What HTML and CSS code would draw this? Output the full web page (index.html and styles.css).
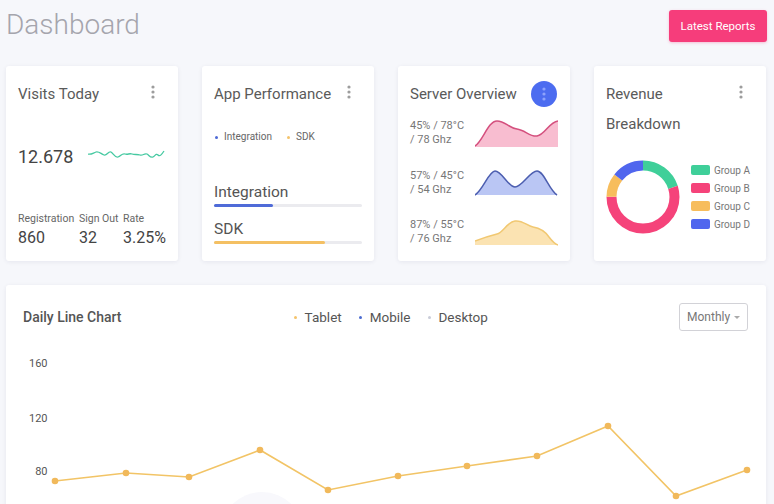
FILE: index.html
```html
<!DOCTYPE html>
<html>
<head>
<meta charset="utf-8">
<link rel="stylesheet" href="styles.css">
</head>
<body>
<div class="page">
  <header class="top">
    <h1 class="page-title">Dashboard</h1>
    <button class="btn-reports">Latest Reports</button>
  </header>

  <section class="cards">
    <div class="card small-card">
      <div class="card-head">
        <h2 class="card-title">Visits Today</h2>
        <svg class="dots" viewBox="0 0 4 14"><circle cx="2" cy="2" r="1.6"/><circle cx="2" cy="7" r="1.6"/><circle cx="2" cy="12" r="1.6"/></svg>
      </div>
      <div class="visits-main">
        <span class="big-num">12.678</span>
        <svg class="spark" viewBox="88 146 77 14"><path d="M88,152 C91,153 93,151 96,150 C99,149 101,152 104,153 C107,154 108,149 111,150 C113,151 115,156 118,155 C121,154 122,151 125,152 C128,153 129,151 132,152 C135,153 137,152 140,153 C143,154 144,151 147,152 C149,153 150,156 153,155 C155,154 156,151 158,153 C160,155 162,152 164,149" fill="none" stroke="#45c9a1" stroke-width="1.3"/></svg>
      </div>
      <div class="stats">
        <div class="stat"><span class="stat-label">Registration</span><span class="stat-val">860</span></div>
        <div class="stat"><span class="stat-label">Sign Out</span><span class="stat-val">32</span></div>
        <div class="stat"><span class="stat-label">Rate</span><span class="stat-val">3.25%</span></div>
      </div>
    </div>

    <div class="card small-card">
      <div class="card-head">
        <h2 class="card-title">App Performance</h2>
        <svg class="dots" viewBox="0 0 4 14"><circle cx="2" cy="2" r="1.6"/><circle cx="2" cy="7" r="1.6"/><circle cx="2" cy="12" r="1.6"/></svg>
      </div>
      <div class="mini-legend">
        <span class="mini-item"><i class="dot dot-blue"></i>Integration</span>
        <span class="mini-item"><i class="dot dot-yellow"></i>SDK</span>
      </div>
      <div class="perf-label first">Integration</div>
      <div class="track"><div class="fill fill-blue" style="width:40%"></div></div>
      <div class="perf-label">SDK</div>
      <div class="track"><div class="fill fill-yellow" style="width:75%"></div></div>
    </div>

    <div class="card small-card">
      <div class="card-head center">
        <h2 class="card-title">Server Overview</h2>
        <span class="round-btn"><svg viewBox="0 0 4 14" width="4" height="14"><circle cx="2" cy="2" r="1.6"/><circle cx="2" cy="7" r="1.6"/><circle cx="2" cy="12" r="1.6"/></svg></span>
      </div>
      <div class="server-rows">
        <div class="server-row">
          <div class="server-text">45% / 78°C<br>/ 78 Ghz</div>
          <svg class="server-chart" viewBox="0 0 83 27"><path d="M0,26 C8,21 13,1 22,1 C30,1 34,8 42,9 C50,10 55,17 62,16 C70,15 74,2 83,1 L83,27 L0,27 Z" fill="#f8bdd0"/><path d="M0,26 C8,21 13,1 22,1 C30,1 34,8 42,9 C50,10 55,17 62,16 C70,15 74,2 83,1" fill="none" stroke="#d4507e" stroke-width="1.5"/></svg>
        </div>
        <div class="server-row">
          <div class="server-text">57% / 45°C<br>/ 54 Ghz</div>
          <svg class="server-chart" viewBox="0 0 83 27"><path d="M0,26 C8,21 14,2 20,2 C27,2 33,18 40,18 C47,18 55,2 62,2 C69,2 74,21 82,26 Z" fill="#bac6f4"/><path d="M0,26 C8,21 14,2 20,2 C27,2 33,18 40,18 C47,18 55,2 62,2 C69,2 74,21 82,26" fill="none" stroke="#4c5eb0" stroke-width="1.5"/></svg>
        </div>
        <div class="server-row">
          <div class="server-text">87% / 55°C<br>/ 76 Ghz</div>
          <svg class="server-chart" viewBox="0 0 83 27"><path d="M0,22 C8,19 14,17 22,15 C28,14 32,3 40,2 C48,1 52,7 58,8 C64,9 70,12 74,18 C77,22 80,25 83,26 L0,26 Z" fill="#fbe3b2"/><path d="M0,22 C8,19 14,17 22,15 C28,14 32,3 40,2 C48,1 52,7 58,8 C64,9 70,12 74,18 C77,22 80,25 83,26" fill="none" stroke="#f1c872" stroke-width="1.5"/></svg>
        </div>
      </div>
    </div>

    <div class="card small-card">
      <div class="card-head">
        <h2 class="card-title">Revenue<br>Breakdown</h2>
        <svg class="dots" viewBox="0 0 4 14"><circle cx="2" cy="2" r="1.6"/><circle cx="2" cy="7" r="1.6"/><circle cx="2" cy="12" r="1.6"/></svg>
      </div>
      <div class="donut-row">
        <svg class="donut" viewBox="0 0 74 74">
          <g transform="rotate(-90 37 37)" fill="none" stroke-width="10">
            <circle cx="37" cy="37" r="31.5" stroke="#3fcf99" stroke-dasharray="39.58 158.34" stroke-dashoffset="0"/>
            <circle cx="37" cy="37" r="31.5" stroke="#f5437a" stroke-dasharray="108.86 89.06" stroke-dashoffset="-39.58"/>
            <circle cx="37" cy="37" r="31.5" stroke="#f7bd5c" stroke-dasharray="20.78 177.14" stroke-dashoffset="-148.44"/>
            <circle cx="37" cy="37" r="31.5" stroke="#5066ee" stroke-dasharray="28.70 169.22" stroke-dashoffset="-169.22"/>
          </g>
        </svg>
        <ul class="donut-legend">
          <li><i class="sw sw-a"></i>Group A</li>
          <li><i class="sw sw-b"></i>Group B</li>
          <li><i class="sw sw-c"></i>Group C</li>
          <li><i class="sw sw-d"></i>Group D</li>
        </ul>
      </div>
    </div>
  </section>

  <section class="card chart-card">
    <div class="chart-head">
      <h2 class="chart-title">Daily Line Chart</h2>
      <div class="chart-legend">
        <span class="leg-item"><i class="leg-dot tablet"></i>Tablet</span>
        <span class="leg-item"><i class="leg-dot mobile"></i>Mobile</span>
        <span class="leg-item"><i class="leg-dot desktop"></i>Desktop</span>
      </div>
      <div class="chart-tools">
        <div class="select">Monthly<span class="caret"></span></div>
      </div>
    </div>
    <svg class="line-chart" viewBox="6 340 760 170" width="760" height="170">
      <circle cx="262" cy="534" r="42" fill="#f8f8fc"/>
      <g class="axis">
        <text x="47.5" y="367" text-anchor="end">160</text>
        <text x="47.5" y="421.5" text-anchor="end">120</text>
        <text x="47.5" y="474.5" text-anchor="end">80</text>
      </g>
      <polyline points="55,481 126,473 189,477 260,450 328,490 398,476 467,466 537,456 608,426 676,496 747,470" fill="none" stroke="#f2c466" stroke-width="1.6"/>
      <g fill="#f1b95b">
        <circle cx="55" cy="481" r="3.3"/><circle cx="126" cy="473" r="3.3"/><circle cx="189" cy="477" r="3.3"/>
        <circle cx="260" cy="450" r="3.3"/><circle cx="328" cy="490" r="3.3"/><circle cx="398" cy="476" r="3.3"/>
        <circle cx="467" cy="466" r="3.3"/><circle cx="537" cy="456" r="3.3"/><circle cx="608" cy="426" r="3.3"/>
        <circle cx="676" cy="496" r="3.3"/><circle cx="747" cy="470" r="3.3"/>
      </g>
    </svg>
  </section>
</div>
</body>
</html>
```

FILE: styles.css
```css
* { box-sizing: border-box; }
html, body { margin: 0; padding: 0; overflow: hidden; }
body {
  background: #f6f7fb;
  font-family: Roboto, "Liberation Sans", Arial, sans-serif;
  color: #555;
}
.page { padding: 0 7px 0 6px; }

.top {
  height: 66px;
  padding-top: 8px;
  display: flex;
  justify-content: space-between;
  align-items: flex-start;
}
.page-title {
  margin: 0;
  font-size: 28px;
  line-height: 34px;
  font-weight: 300;
  color: #a5a5ad;
}
.btn-reports {
  margin-top: 2px;
  width: 98px;
  height: 32px;
  padding: 0;
  border: 0;
  border-radius: 3px;
  background: #f63d7b;
  color: #fff;
  font-family: inherit;
  font-size: 11.5px;
  box-shadow: 0 1px 3px rgba(246, 61, 123, 0.3);
}

.cards {
  display: grid;
  grid-template-columns: repeat(4, 172px);
  gap: 24px;
}
.card {
  background: #fff;
  border-radius: 3px;
  box-shadow: 0 1px 4px rgba(40, 40, 90, 0.08);
}
.small-card {
  height: 195px;
  padding: 13px 12px 13px 12px;
  display: flex;
  flex-direction: column;
}
.card-head {
  display: flex;
  justify-content: space-between;
  align-items: flex-start;
}
.card-head.center { align-items: center; }
.card-title {
  margin: 0;
  font-size: 15px;
  line-height: 30px;
  font-weight: 400;
  color: #5a5a5a;
  white-space: nowrap;
}
.dots {
  flex: none;
  width: 4px;
  height: 14px;
  margin: 6px 11px 0 0;
  fill: #9d9d9d;
}
.round-btn {
  flex: none;
  width: 26px;
  height: 26px;
  margin-right: 1px;
  border-radius: 50%;
  background: #4c6cf0;
  display: flex;
  align-items: center;
  justify-content: center;
  fill: #8ea3fb;
}

/* Visits */
.visits-main {
  margin-top: 36px;
  display: flex;
  align-items: center;
  height: 24px;
}
.big-num {
  font-size: 18px;
  line-height: 24px;
  color: #444;
}
.spark {
  width: 77px;
  height: 14px;
  margin-left: 15px;
  margin-bottom: 5px;
}
.stats {
  margin-top: auto;
  display: grid;
  grid-template-columns: 61px 44px 1fr;
}
.stat { display: flex; flex-direction: column; }
.stat-label {
  font-size: 10.5px;
  line-height: 14px;
  color: #666;
  white-space: nowrap;
}
.stat-val {
  margin-top: 2.5px;
  font-size: 16px;
  line-height: 20px;
  color: #444;
}

/* App performance */
.mini-legend {
  margin-top: 21px;
  display: flex;
  gap: 14px;
  font-size: 10px;
  line-height: 14px;
  color: #666;
}
.mini-item { display: flex; align-items: center; }
.dot {
  width: 3px;
  height: 3px;
  border-radius: 50%;
  margin: 0 6px 0 1px;
}
.dot-blue { background: #4d69d6; }
.dot-yellow { background: #f4c36b; }
.perf-label {
  margin-top: 13px;
  font-size: 15.5px;
  line-height: 18px;
  color: #555;
}
.perf-label.first { margin-top: 39px; }
.track {
  margin-top: 3px;
  height: 3px;
  background: #ebebef;
  border-radius: 2px;
}
.fill { height: 3px; border-radius: 2px; }
.fill-blue { background: #4f6bd8; }
.fill-yellow { background: #f4c063; }

/* Server */
.server-rows {
  margin-top: 10px;
  display: flex;
  flex-direction: column;
  gap: 21.5px;
}
.server-row {
  display: flex;
  align-items: center;
  justify-content: space-between;
  height: 28px;
}
.server-text {
  font-size: 11px;
  line-height: 14px;
  color: #777;
}
.server-chart {
  width: 83px;
  height: 27px;
}

/* Revenue */
.donut-row {
  margin-top: 21px;
  display: flex;
  align-items: center;
}
.donut { width: 74px; height: 74px; flex: none; }
.donut-legend {
  list-style: none;
  margin: 0 0 0 11px;
  padding: 0;
}
.donut-legend li {
  display: flex;
  align-items: center;
  height: 18px;
  font-size: 10px;
  color: #777;
}
.sw {
  width: 19px;
  height: 10px;
  border-radius: 2px;
  margin-right: 4px;
}
.sw-a { background: #3fcf99; }
.sw-b { background: #f5437a; }
.sw-c { background: #f7bd5c; }
.sw-d { background: #5066ee; }

/* Chart card */
.chart-card {
  width: 760px;
  height: 240px;
  margin-top: 24px;
  padding-top: 18px;
}
.chart-head {
  height: 28px;
  padding: 0 18px 0 17px;
  display: flex;
  align-items: center;
}
.chart-title {
  flex: 1;
  margin: 0;
  font-size: 14px;
  line-height: 20px;
  font-weight: 500;
  color: #555;
}
.chart-legend {
  margin-left: 11px;
  display: flex;
  gap: 17.5px;
  font-size: 13.5px;
  color: #555;
}
.leg-item { display: flex; align-items: center; }
.leg-dot {
  width: 3px;
  height: 3px;
  border-radius: 50%;
  margin-right: 7.5px;
}
.leg-dot.tablet { background: #f4c36b; }
.leg-dot.mobile { background: #4a6bd0; }
.leg-dot.desktop { background: #c9ccd8; }
.chart-tools {
  flex: 1;
  display: flex;
  justify-content: flex-end;
}
.select {
  width: 69px;
  height: 28px;
  border: 1px solid #d2d2d7;
  border-radius: 3px;
  padding-left: 7px;
  display: flex;
  align-items: center;
  font-size: 12px;
  color: #777;
}
.caret {
  margin-left: 4px;
  width: 0;
  height: 0;
  border-left: 3.5px solid transparent;
  border-right: 3.5px solid transparent;
  border-top: 3.5px solid #aaa;
}
.line-chart {
  display: block;
  margin-top: 9px;
}
.axis text {
  font-family: Roboto, "Liberation Sans", Arial, sans-serif;
  font-size: 11px;
  fill: #555;
}
```
